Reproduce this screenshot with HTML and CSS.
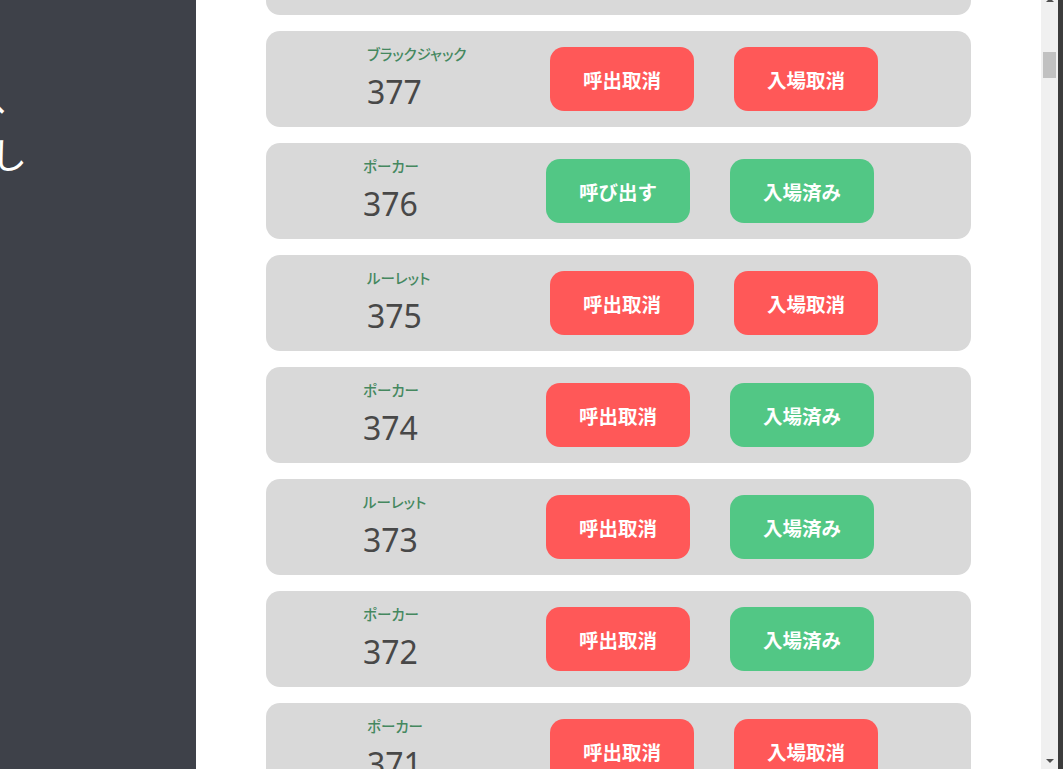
FILE: index.html
```html
<!DOCTYPE html>
<html lang="ja">
<head>
<meta charset="utf-8">
<title>呼び出し管理</title>
<link rel="stylesheet" href="styles.css">
</head>
<body>
<div class="app">
  <aside class="sidebar">
    <div class="side-title">
      <div class="side-line side-line--first">ホームへ</div>
      <div class="side-line side-line--second">呼び出し</div>
    </div>
  </aside>
  <main class="main">
    <div class="list">
      <div class="card card--cancel">
        <div class="info"><div class="game">ポーカー</div><div class="num">378</div></div>
        <div class="btn btn--red">呼出取消</div>
        <div class="btn btn--red">入場取消</div>
      </div>
      <div class="card card--cancel">
        <div class="info"><div class="game">ブラックジャック</div><div class="num">377</div></div>
        <div class="btn btn--red">呼出取消</div>
        <div class="btn btn--red">入場取消</div>
      </div>
      <div class="card">
        <div class="info"><div class="game">ポーカー</div><div class="num">376</div></div>
        <div class="btn btn--green">呼び出す</div>
        <div class="btn btn--green">入場済み</div>
      </div>
      <div class="card card--cancel">
        <div class="info"><div class="game">ルーレット</div><div class="num">375</div></div>
        <div class="btn btn--red">呼出取消</div>
        <div class="btn btn--red">入場取消</div>
      </div>
      <div class="card">
        <div class="info"><div class="game">ポーカー</div><div class="num">374</div></div>
        <div class="btn btn--red">呼出取消</div>
        <div class="btn btn--green">入場済み</div>
      </div>
      <div class="card">
        <div class="info"><div class="game">ルーレット</div><div class="num">373</div></div>
        <div class="btn btn--red">呼出取消</div>
        <div class="btn btn--green">入場済み</div>
      </div>
      <div class="card">
        <div class="info"><div class="game">ポーカー</div><div class="num">372</div></div>
        <div class="btn btn--red">呼出取消</div>
        <div class="btn btn--green">入場済み</div>
      </div>
      <div class="card card--cancel">
        <div class="info"><div class="game">ポーカー</div><div class="num">371</div></div>
        <div class="btn btn--red">呼出取消</div>
        <div class="btn btn--red">入場取消</div>
      </div>
    </div>
  </main>
  <div class="scrollbar">
    <div class="sb-up"></div>
    <div class="sb-thumb"></div>
    <div class="sb-track"></div>
    <div class="sb-down"></div>
  </div>
  <div class="edge"></div>
</div>
</body>
</html>
```

FILE: styles.css
```css
html, body {
  margin: 0;
  padding: 0;
  height: 100%;
  overflow: hidden;
}

body {
  font-family: "Noto Sans", "Noto Sans CJK JP", sans-serif;
}

.app {
  display: flex;
  height: 769px;
  overflow: hidden;
}

.sidebar {
  width: 196px;
  flex: 0 0 196px;
  background: #3e4149;
  overflow: hidden;
  color: #ffffff;
}

.side-title {
  padding-top: 75px;
  font-family: "Noto Sans CJK JP", sans-serif;
  font-size: 36px;
  line-height: 48px;
  white-space: nowrap;
}

.side-line--first {
  margin-left: -137px;
}

.side-line--second {
  margin-left: -117px;
  margin-top: 6px;
}

.main {
  flex: 1 1 auto;
  background: #ffffff;
  overflow: hidden;
}

.list {
  display: flex;
  flex-direction: column;
  gap: 16px;
  padding: 0 70px;
  margin-top: -81px;
}

.card {
  display: flex;
  align-items: center;
  justify-content: center;
  height: 96px;
  flex: 0 0 96px;
  border-radius: 14px;
  background: #d9d9d9;
}

.card--cancel {
  padding-left: 8px;
}

.info {
  width: 183px;
  display: flex;
  flex-direction: column;
  gap: 8px;
  padding-bottom: 3px;
}

.game {
  font-family: "Noto Sans CJK JP", sans-serif;
  font-feature-settings: "palt";
  font-weight: 500;
  font-size: 14.5px;
  line-height: 20px;
  color: #45885f;
}

.num {
  font-family: "Noto Sans", sans-serif;
  font-weight: 400;
  font-size: 32px;
  line-height: 40px;
  color: #484848;
}

.btn {
  width: 144px;
  height: 64px;
  border-radius: 14px;
  display: flex;
  align-items: center;
  justify-content: center;
  color: #ffffff;
  font-family: "Noto Sans CJK JP", sans-serif;
  font-weight: 700;
  font-size: 19.5px;
}

.btn + .btn {
  margin-left: 40px;
}

.btn--red {
  background: #ff5858;
}

.btn--green {
  background: #52c785;
}

.scrollbar {
  flex: 0 0 17px;
  width: 17px;
  background: #f0f0f0;
  display: flex;
  flex-direction: column;
  align-items: center;
}

.sb-up {
  width: 0;
  height: 0;
  border-left: 4px solid transparent;
  border-right: 4px solid transparent;
  border-bottom: 4px solid #505050;
  margin-top: -2px;
}

.sb-thumb {
  width: 13px;
  height: 26px;
  margin-top: 50px;
  background: #c1c1c1;
}

.sb-track {
  flex: 1 1 auto;
}

.sb-down {
  width: 0;
  height: 0;
  border-left: 4px solid transparent;
  border-right: 4px solid transparent;
  border-top: 4px solid #505050;
  margin-bottom: 6px;
}

.edge {
  flex: 0 0 5px;
  background: #3c3c3c;
}
```
